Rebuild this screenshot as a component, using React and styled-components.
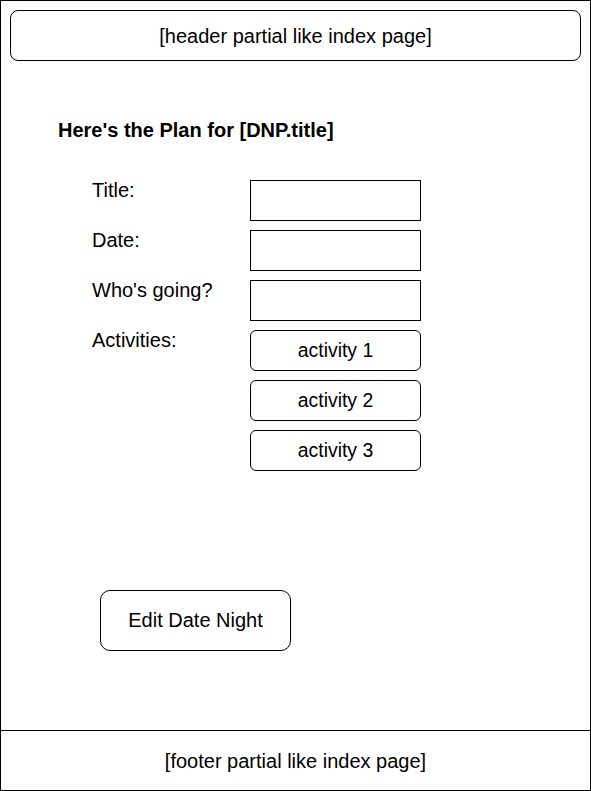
import React from "react";
import styled, { createGlobalStyle } from "styled-components";

const GlobalStyle = createGlobalStyle`
  html, body {
    margin: 0;
    padding: 0;
    background: #ffffff;
  }
  body {
    font-family: "Liberation Sans", Helvetica, Arial, sans-serif;
    color: #000000;
  }
  * {
    box-sizing: border-box;
  }
`;

const Frame = styled.div`
  width: 591px;
  height: 791px;
  border: 1px solid #000;
  display: flex;
  flex-direction: column;
  background: #fff;
`;

const HeaderBox = styled.header`
  margin: 9px 9px 0 9px;
  height: 51px;
  border: 1px solid #000;
  border-radius: 8px;
  display: flex;
  align-items: center;
  justify-content: center;
  font-size: 20px;
  line-height: 24px;
`;

const Main = styled.main`
  flex: 1;
  display: flex;
  flex-direction: column;
  padding: 57px 0 0 57px;
`;

const Heading = styled.h1`
  margin: 0;
  font-size: 20px;
  font-weight: 700;
  line-height: 24px;
`;

const Form = styled.div`
  display: grid;
  grid-template-columns: 158px 171px;
  row-gap: 9px;
  margin: 38px 0 0 34px;
`;

const Label = styled.div`
  font-size: 20px;
  line-height: 20px;
  align-self: start;
`;

const Field = styled.div`
  width: 171px;
  height: 41px;
  border: 1px solid #000;
  background: #fff;
`;

const ActivityList = styled.div`
  display: flex;
  flex-direction: column;
  gap: 9px;
`;

const Activity = styled.div`
  width: 171px;
  height: 41px;
  border: 1px solid #000;
  border-radius: 6px;
  display: flex;
  align-items: center;
  justify-content: center;
  font-size: 19.4px;
`;

const EditButton = styled.button`
  margin: 119px 0 0 42px;
  width: 191px;
  height: 61px;
  border: 1px solid #000;
  border-radius: 10px;
  background: #fff;
  color: #000;
  font-family: "Liberation Sans", Helvetica, Arial, sans-serif;
  font-size: 20px;
  padding: 0;
  cursor: pointer;
  display: flex;
  align-items: center;
  justify-content: center;
`;

const Footer = styled.footer`
  height: 60px;
  border-top: 1px solid #000;
  display: flex;
  align-items: center;
  justify-content: center;
  font-size: 20px;
  line-height: 24px;
`;

const fields = ["Title:", "Date:", "Who's going?"];
const activities = ["activity 1", "activity 2", "activity 3"];

export default function App() {
  return (
    <>
      <GlobalStyle />
      <Frame>
        <HeaderBox>[header partial like index page]</HeaderBox>
        <Main>
          <Heading>Here's the Plan for [DNP.title]</Heading>
          <Form>
            {fields.map((f) => (
              <React.Fragment key={f}>
                <Label>{f}</Label>
                <Field />
              </React.Fragment>
            ))}
            <Label>Activities:</Label>
            <ActivityList>
              {activities.map((a) => (
                <Activity key={a}>{a}</Activity>
              ))}
            </ActivityList>
          </Form>
          <EditButton>Edit Date Night</EditButton>
        </Main>
        <Footer>[footer partial like index page]</Footer>
      </Frame>
    </>
  );
}
